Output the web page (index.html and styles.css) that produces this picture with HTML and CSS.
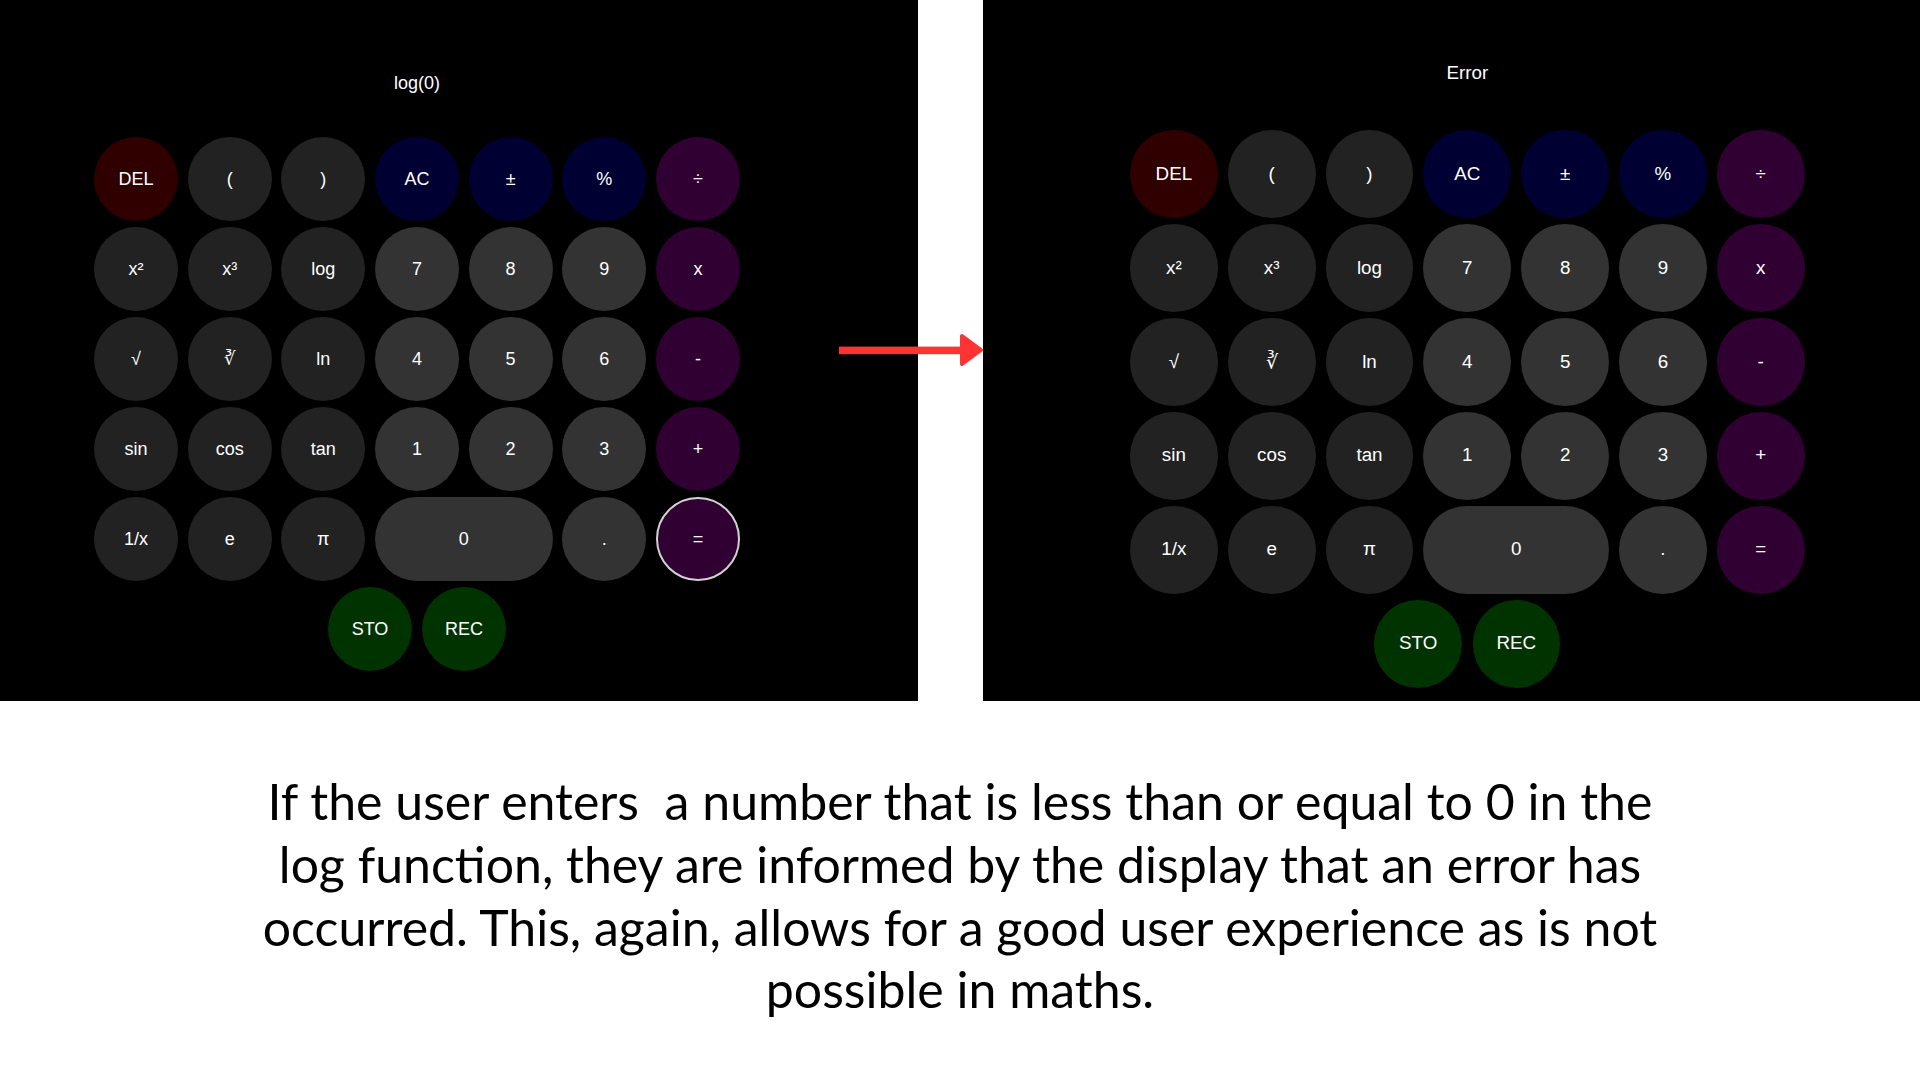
FILE: index.html
```html
<!DOCTYPE html>
<html lang="en">
<head>
<meta charset="utf-8">
<title>Calculator log error</title>
<link rel="stylesheet" href="styles.css">
</head>
<body>
<div class="stage">
  <section class="panel panel-left">
    <div class="calc calc-left">
      <div class="display">log(0)</div>
      <div class="keys">
        <div class="key del">DEL</div>
        <div class="key fn">(</div>
        <div class="key fn">)</div>
        <div class="key blue">AC</div>
        <div class="key blue">±</div>
        <div class="key blue">%</div>
        <div class="key op">÷</div>
        <div class="key fn">x²</div>
        <div class="key fn">x³</div>
        <div class="key fn">log</div>
        <div class="key num">7</div>
        <div class="key num">8</div>
        <div class="key num">9</div>
        <div class="key op">x</div>
        <div class="key fn">√</div>
        <div class="key fn">∛</div>
        <div class="key fn">ln</div>
        <div class="key num">4</div>
        <div class="key num">5</div>
        <div class="key num">6</div>
        <div class="key op">-</div>
        <div class="key fn">sin</div>
        <div class="key fn">cos</div>
        <div class="key fn">tan</div>
        <div class="key num">1</div>
        <div class="key num">2</div>
        <div class="key num">3</div>
        <div class="key op">+</div>
        <div class="key fn">1/x</div>
        <div class="key fn">e</div>
        <div class="key fn">π</div>
        <div class="key num zero">0</div>
        <div class="key num">.</div>
        <div class="key op focused">=</div>
      </div>
      <div class="mem">
        <div class="key green">STO</div>
        <div class="key green">REC</div>
      </div>
    </div>
  </section>
  <div class="gap"></div>
  <section class="panel panel-right">
    <div class="calc calc-right">
      <div class="display">Error</div>
      <div class="keys">
        <div class="key del">DEL</div>
        <div class="key fn">(</div>
        <div class="key fn">)</div>
        <div class="key blue">AC</div>
        <div class="key blue">±</div>
        <div class="key blue">%</div>
        <div class="key op">÷</div>
        <div class="key fn">x²</div>
        <div class="key fn">x³</div>
        <div class="key fn">log</div>
        <div class="key num">7</div>
        <div class="key num">8</div>
        <div class="key num">9</div>
        <div class="key op">x</div>
        <div class="key fn">√</div>
        <div class="key fn">∛</div>
        <div class="key fn">ln</div>
        <div class="key num">4</div>
        <div class="key num">5</div>
        <div class="key num">6</div>
        <div class="key op">-</div>
        <div class="key fn">sin</div>
        <div class="key fn">cos</div>
        <div class="key fn">tan</div>
        <div class="key num">1</div>
        <div class="key num">2</div>
        <div class="key num">3</div>
        <div class="key op">+</div>
        <div class="key fn">1/x</div>
        <div class="key fn">e</div>
        <div class="key fn">π</div>
        <div class="key num zero">0</div>
        <div class="key num">.</div>
        <div class="key op">=</div>
      </div>
      <div class="mem">
        <div class="key green">STO</div>
        <div class="key green">REC</div>
      </div>
    </div>
  </section>
  <svg class="arrow" viewBox="0 0 148 36" width="148" height="36" aria-hidden="true">
    <rect x="2" y="14.6" width="126" height="7.6" fill="#ff3333"/>
    <polygon points="125,4 144,18 125,32" fill="#ff3333" stroke="#ff3333" stroke-width="4" stroke-linejoin="round"/>
  </svg>
</div>
<p class="caption">If the user enters&nbsp; a number that is less than or equal to 0 in the<br>log function, they are informed by the display that an error has<br>occurred. This, again, allows for a good user experience as is not<br>possible in maths.</p>
</body>
</html>
```

FILE: styles.css
```css
* {
  box-sizing: border-box;
}

body {
  margin: 0;
  background: #ffffff;
  font-family: "Liberation Sans", Arial, sans-serif;
}

.stage {
  position: relative;
  display: flex;
  height: 701px;
}

.panel {
  background: #000000;
}

.panel-left {
  width: 918px;
  padding: 73px 0 0 94px;
}

.gap {
  width: 65px;
}

.panel-right {
  flex: 1;
  padding: 63px 0 0 147px;
}

.calc {
  width: max-content;
  color: #ffffff;
}

.calc-left {
  font-size: 18px;
}

.calc-right {
  font-size: 18.8px;
}

.display {
  text-align: center;
  height: 1.111em;
  line-height: 1.111em;
  margin-bottom: 2.46em;
}

.keys {
  display: grid;
  grid-template-columns: repeat(7, 4.6667em);
  grid-auto-rows: 4.6667em;
  column-gap: 0.537em;
  row-gap: 0.333em;
}

.key {
  display: flex;
  align-items: center;
  justify-content: center;
  border-radius: 50%;
  color: #ffffff;
  line-height: 1;
}

.fn {
  background: #222222;
}

.num {
  background: #333333;
}

.del {
  background: #300000;
}

.blue {
  background: #000033;
}

.op {
  background: #300033;
}

.green {
  background: #003300;
}

.focused {
  border: 2px solid #d2d2d2;
}

.zero {
  grid-column: span 2;
  border-radius: 2.3333em;
}

.mem {
  display: flex;
  justify-content: center;
  gap: 0.555em;
  margin-top: 0.333em;
}

.mem .key {
  width: 4.6667em;
  height: 4.6667em;
}

.arrow {
  position: absolute;
  left: 837px;
  top: 332px;
}

.caption {
  margin: 0;
  padding-top: 69px;
  text-align: center;
  font-family: Lato, "Open Sans", sans-serif;
  font-size: 50px;
  line-height: 62.8px;
  color: #000000;
}
```
